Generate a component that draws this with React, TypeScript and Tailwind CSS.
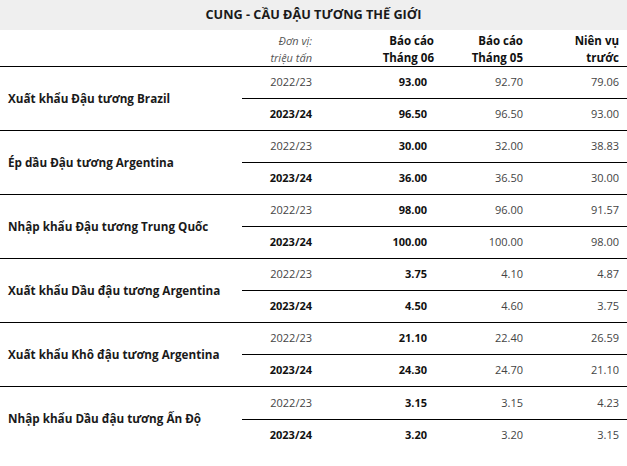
import React from "react";

type Group = { label: string; rows: [string, string, string, string][] };

const groups: Group[] = [
  { label: "Xuất khẩu Đậu tương Brazil", rows: [["2022/23", "93.00", "92.70", "79.06"], ["2023/24", "96.50", "96.50", "93.00"]] },
  { label: "Ép dầu Đậu tương Argentina", rows: [["2022/23", "30.00", "32.00", "38.83"], ["2023/24", "36.00", "36.50", "30.00"]] },
  { label: "Nhập khẩu Đậu tương Trung Quốc", rows: [["2022/23", "98.00", "96.00", "91.57"], ["2023/24", "100.00", "100.00", "98.00"]] },
  { label: "Xuất khẩu Dầu đậu tương Argentina", rows: [["2022/23", "3.75", "4.10", "4.87"], ["2023/24", "4.50", "4.60", "3.75"]] },
  { label: "Xuất khẩu Khô đậu tương Argentina", rows: [["2022/23", "21.10", "22.40", "26.59"], ["2023/24", "24.30", "24.70", "21.10"]] },
  { label: "Nhập khẩu Dầu đậu tương Ấn Độ", rows: [["2022/23", "3.15", "3.15", "4.23"], ["2023/24", "3.20", "3.20", "3.15"]] },
];

export default function App() {
  return (
    <div
      className="w-[627px] h-[466px] bg-white text-[#222] overflow-hidden"
      style={{ fontFamily: '"Open Sans", "Noto Sans", sans-serif' }}
    >
      <div className="h-[30px] bg-[#efefef] flex items-center justify-center text-[12.7px] font-bold text-[#1a1a1a]">
        CUNG - CẦU ĐẬU TƯƠNG THẾ GIỚI
      </div>
      <div className="h-[37px] grid grid-cols-[242px_78px_115px_96px_96px] border-b border-black text-[11.5px] leading-[17px] pt-[2px]">
        <div />
        <div className="text-right pr-2 italic text-[#555] text-[11px]">
          <div>Đơn vị:</div>
          <div>triệu tấn</div>
        </div>
        <div className="text-right pr-[1px] font-bold text-[#111]">
          <div>Báo cáo</div>
          <div>Tháng 06</div>
        </div>
        <div className="text-right pr-2 font-bold text-[#111]">
          <div>Báo cáo</div>
          <div>Tháng 05</div>
        </div>
        <div className="text-right pr-2 font-bold text-[#111]">
          <div>Niên vụ</div>
          <div>trước</div>
        </div>
      </div>
      {groups.map((g, gi) => (
        <div
          key={gi}
          className={`h-[64px] grid grid-cols-[242px_385px] ${gi < groups.length - 1 ? "border-b border-black" : ""}`}
        >
          <div className="flex items-center pl-2 text-[11.7px] font-bold text-[#1a1a1a]">{g.label}</div>
          <div className="flex flex-col">
            {g.rows.map((r, ri) => (
              <div
                key={ri}
                className={`flex-1 grid grid-cols-[78px_115px_96px_96px] items-center text-[11px] ${ri === 0 ? "border-b border-black" : ""}`}
              >
                <div className={`text-right pr-2 ${ri === 1 ? "font-bold text-[#111]" : "text-[#444]"}`}>{r[0]}</div>
                <div className="text-right pr-2 font-bold text-[#111]">{r[1]}</div>
                <div className="text-right pr-2 text-[#444]">{r[2]}</div>
                <div className="text-right pr-2 text-[#444]">{r[3]}</div>
              </div>
            ))}
          </div>
        </div>
      ))}
    </div>
  );
}
